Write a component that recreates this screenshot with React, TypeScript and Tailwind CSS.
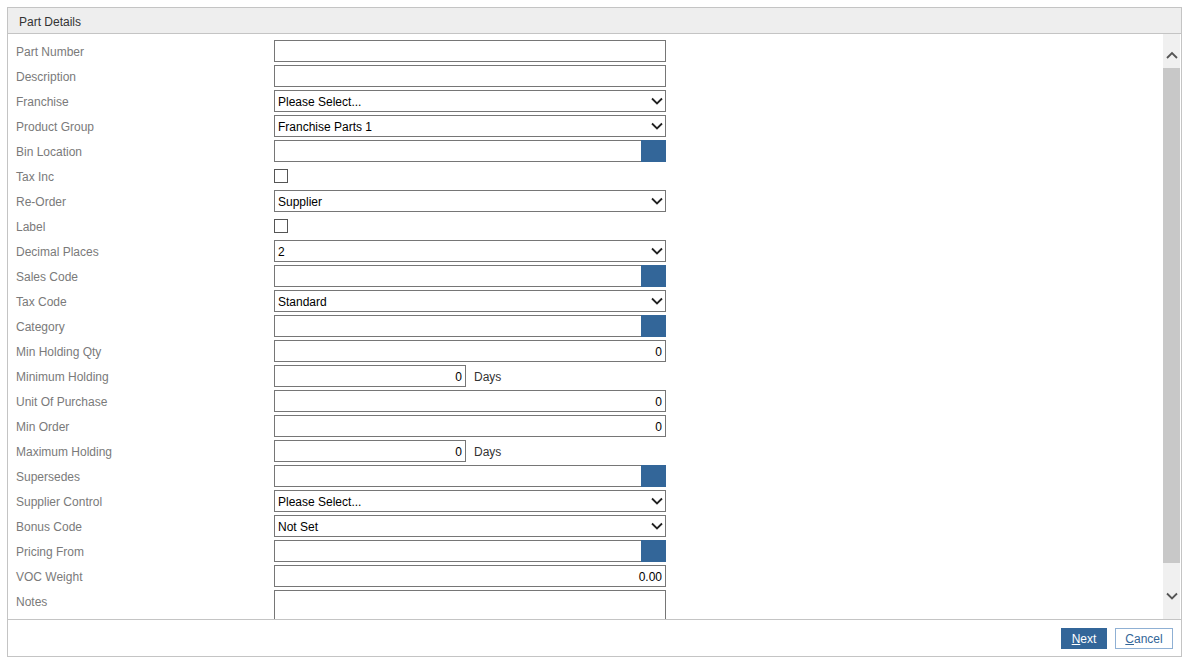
import { ReactNode } from 'react';

type Field =
  | { label: string; kind: 'text'; value?: string; align?: 'right' }
  | { label: string; kind: 'select'; value: string }
  | { label: string; kind: 'lookup' }
  | { label: string; kind: 'check' }
  | { label: string; kind: 'days'; value: string }
  | { label: string; kind: 'notes' };

const fields: Field[] = [
  { label: 'Part Number', kind: 'text' },
  { label: 'Description', kind: 'text' },
  { label: 'Franchise', kind: 'select', value: 'Please Select...' },
  { label: 'Product Group', kind: 'select', value: 'Franchise Parts 1' },
  { label: 'Bin Location', kind: 'lookup' },
  { label: 'Tax Inc', kind: 'check' },
  { label: 'Re-Order', kind: 'select', value: 'Supplier' },
  { label: 'Label', kind: 'check' },
  { label: 'Decimal Places', kind: 'select', value: '2' },
  { label: 'Sales Code', kind: 'lookup' },
  { label: 'Tax Code', kind: 'select', value: 'Standard' },
  { label: 'Category', kind: 'lookup' },
  { label: 'Min Holding Qty', kind: 'text', value: '0', align: 'right' },
  { label: 'Minimum Holding', kind: 'days', value: '0' },
  { label: 'Unit Of Purchase', kind: 'text', value: '0', align: 'right' },
  { label: 'Min Order', kind: 'text', value: '0', align: 'right' },
  { label: 'Maximum Holding', kind: 'days', value: '0' },
  { label: 'Supersedes', kind: 'lookup' },
  { label: 'Supplier Control', kind: 'select', value: 'Please Select...' },
  { label: 'Bonus Code', kind: 'select', value: 'Not Set' },
  { label: 'Pricing From', kind: 'lookup' },
  { label: 'VOC Weight', kind: 'text', value: '0.00', align: 'right' },
  { label: 'Notes', kind: 'notes' },
];

const Chevron = ({ up = false, className = '' }: { up?: boolean; className?: string }) => (
  <svg width="12" height="8" viewBox="0 0 12 8" className={className}>
    <path
      d={up ? 'M1 7 L6 2 L11 7' : 'M1 1.5 L6 6.5 L11 1.5'}
      fill="none"
      stroke="currentColor"
      strokeWidth="1.8"
    />
  </svg>
);

const Box = ({ children, className = '' }: { children?: ReactNode; className?: string }) => (
  <div className={`h-[22px] border border-[#767676] bg-white flex items-center px-[3px] pt-[2px] text-[12px] text-black ${className}`}>
    {children}
  </div>
);

const Control = ({ f }: { f: Field }) => {
  switch (f.kind) {
    case 'text':
      return (
        <Box className={`w-[392px] ${f.align === 'right' ? 'justify-end' : ''}`}>
          {f.value}
        </Box>
      );
    case 'select':
      return (
        <Box className="w-[392px] justify-between pr-[2px]">
          <span>{f.value}</span>
          <Chevron className="text-[#222] -mt-[2px]" />
        </Box>
      );
    case 'lookup':
      return (
        <div className="flex w-[392px] h-[22px]">
          <div className="flex-1 border border-[#767676] border-r-0 bg-white" />
          <div className="w-[25px] bg-[#336699]" />
        </div>
      );
    case 'check':
      return <div className="w-[14px] h-[14px] border border-[#555] bg-white" />;
    case 'days':
      return (
        <div className="flex items-center gap-[8px]">
          <Box className="w-[192px] justify-end">{f.value}</Box>
          <span className="text-[12px] text-[#333] pt-[2px]">Days</span>
        </div>
      );
    case 'notes':
      return <div className="w-[392px] h-[50px] border border-[#767676] bg-white" />;
  }
};

export default function App() {
  return (
    <div className="w-[1185px] h-[659px] bg-white p-[7px] pb-[2px] pr-[3px] text-[12px]" style={{ fontFamily: '"Segoe UI", "Liberation Sans", Arial, sans-serif' }}>
      <div className="h-[650px] border border-[#c4c4c4] flex flex-col">
        <div className="h-[26px] bg-[#eeeeee] border-b border-[#c4c4c4] flex items-center px-[11px] pt-[2px] text-[#333]">
          Part Details
        </div>
        <div className="h-[585px] flex overflow-hidden">
          <div className="flex-1 pt-[6px] pl-[8px] flex flex-col gap-[3px] overflow-hidden">
            {fields.map((f) => (
              <div key={f.label} className={`flex ${f.kind === 'notes' ? 'items-start' : 'items-center'} min-h-[22px] shrink-0`}>
                <div className={`w-[258px] text-[#7a7a7a] ${f.kind === 'notes' ? 'pt-[3px]' : 'pt-[2px]'}`}>{f.label}</div>
                <Control f={f} />
              </div>
            ))}
          </div>
          <div className="w-[17px] mr-[1px] bg-[#f0f0f0] flex flex-col items-center">
            <div className="h-[34px] flex items-start justify-center pt-[17px] text-[#555]">
              <Chevron up />
            </div>
            <div className="w-full flex-1 bg-[#c8c8c8]" />
            <div className="h-[56px] flex items-start justify-center pt-[29px] text-[#555]">
              <Chevron />
            </div>
          </div>
        </div>
        <div className="flex-1 border-t border-[#c4c4c4] flex items-center justify-end gap-[8px] pr-[8px]">
          <button className="h-[21px] w-[46px] bg-[#336699] text-white text-[12px] pt-[1px]">
            <span className="underline">N</span>ext
          </button>
          <button className="h-[21px] w-[58px] bg-white border border-[#8fb0d4] text-[#336699] text-[12px] pt-[1px]">
            <span className="underline">C</span>ancel
          </button>
        </div>
      </div>
    </div>
  );
}
